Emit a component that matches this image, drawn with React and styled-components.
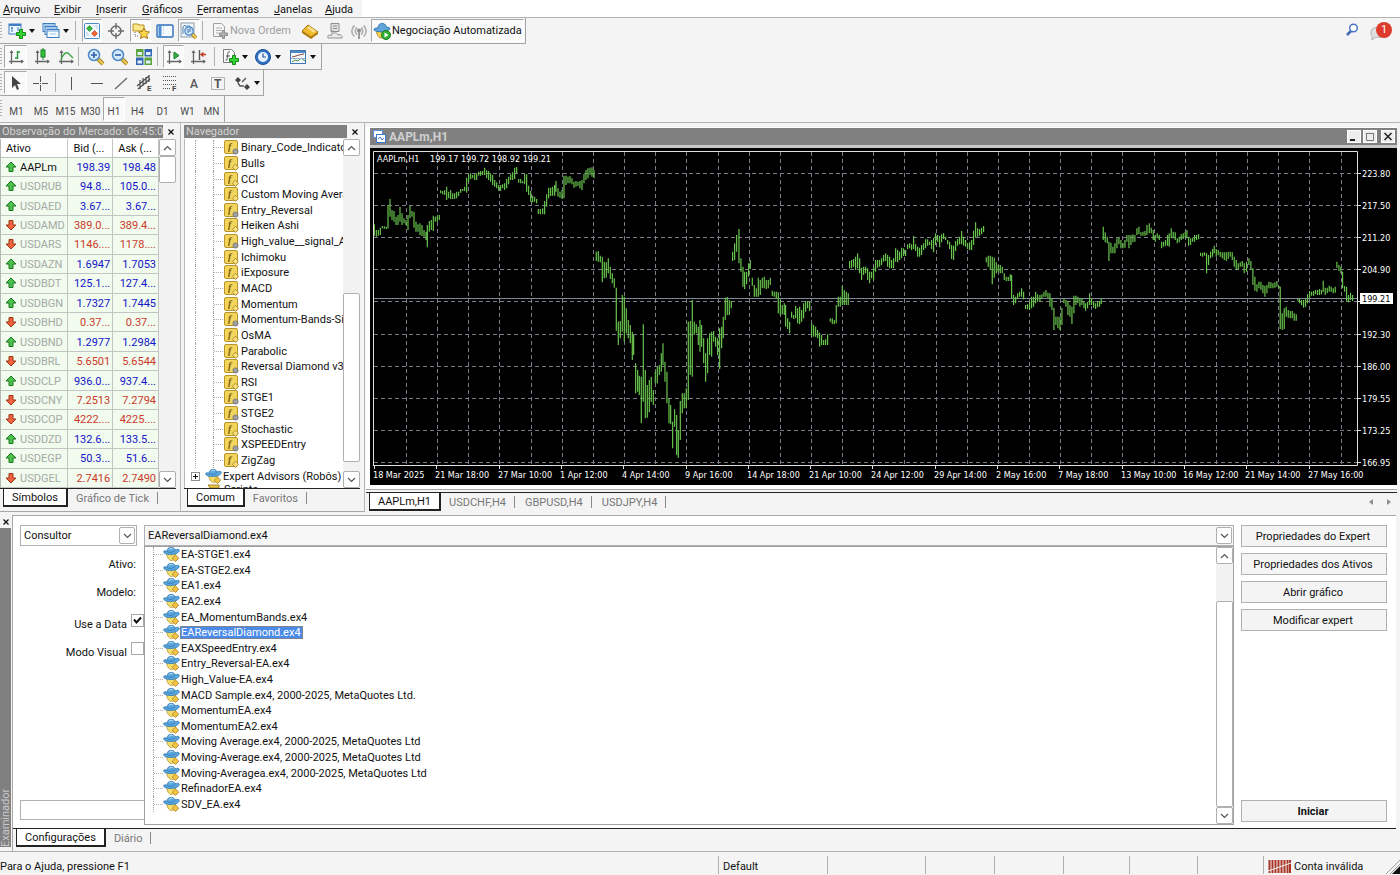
import React, { useState } from "react";
import styled, { createGlobalStyle, css } from "styled-components";

const GlobalStyle = createGlobalStyle`
    * {
        box-sizing: border-box;
    }

    body {
        margin: 0;
        background-color: #f4f4f4;
        color: #111111;
        font-family: Roboto, "DejaVu Sans Condensed", "Noto Sans", sans-serif;
        font-size: 11px;
        line-height: 14px;
    }

    button,
    input,
    select {
        font: inherit;
        color: inherit;
    }

    ul {
        list-style: none;
        margin: 0;
        padding: 0;
    }
`;

/* ---------- data ---------- */

const menus = ["Arquivo", "Exibir", "Inserir", "Gráficos", "Ferramentas", "Janelas", "Ajuda"];
const menuWidths = [51, 42, 46, 55, 77, 51, 40];

const timeframes = ["M1", "M5", "M15", "M30", "H1", "H4", "D1", "W1", "MN"];
const timeframeWidths = [25, 24, 25, 25, 22, 25, 25, 25, 23];

const symbols = [
    ["AAPLm", "198.39", "198.48", true],
    ["USDRUB", "94.8...", "105.0...", true],
    ["USDAED", "3.67...", "3.67...", true],
    ["USDAMD", "389.0...", "389.4...", false],
    ["USDARS", "1146....", "1178....", false],
    ["USDAZN", "1.6947", "1.7053", true],
    ["USDBDT", "125.1...", "127.4...", true],
    ["USDBGN", "1.7327", "1.7445", true],
    ["USDBHD", "0.37...", "0.37...", false],
    ["USDBND", "1.2977", "1.2984", true],
    ["USDBRL", "5.6501", "5.6544", false],
    ["USDCLP", "936.0...", "937.4...", true],
    ["USDCNY", "7.2513", "7.2794", false],
    ["USDCOP", "4222....", "4225....", false],
    ["USDDZD", "132.6...", "133.5...", true],
    ["USDEGP", "50.3...", "51.6...", true],
    ["USDGEL", "2.7416", "2.7490", false],
];

// second value: custom indicators carry the grey gear badge
const indicators = [
    ["Binary_Code_Indicator", true],
    ["Bulls", false],
    ["CCI", false],
    ["Custom Moving Average", false],
    ["Entry_Reversal", true],
    ["Heiken Ashi", false],
    ["High_value__signal_Alert", true],
    ["Ichimoku", false],
    ["iExposure", false],
    ["MACD", false],
    ["Momentum", false],
    ["Momentum-Bands-Signal", true],
    ["OsMA", false],
    ["Parabolic", false],
    ["Reversal Diamond v3.0", true],
    ["RSI", false],
    ["STGE1", true],
    ["STGE2", true],
    ["Stochastic", false],
    ["XSPEEDEntry", true],
    ["ZigZag", false],
];

const experts = [
    "EA-STGE1.ex4",
    "EA-STGE2.ex4",
    "EA1.ex4",
    "EA2.ex4",
    "EA_MomentumBands.ex4",
    "EAReversalDiamond.ex4",
    "EAXSpeedEntry.ex4",
    "Entry_Reversal-EA.ex4",
    "High_Value-EA.ex4",
    "MACD Sample.ex4, 2000-2025, MetaQuotes Ltd.",
    "MomentumEA.ex4",
    "MomentumEA2.ex4",
    "Moving Average.ex4, 2000-2025, MetaQuotes Ltd",
    "Moving-Average.ex4, 2000-2025, MetaQuotes Ltd",
    "Moving-Averagea.ex4, 2000-2025, MetaQuotes Ltd",
    "RefinadorEA.ex4",
    "SDV_EA.ex4",
];

const prices = ["223.80", "217.50", "211.20", "204.90", "", "192.30", "186.00", "179.55", "173.25", "166.95"];

const dates = [
    "18 Mar 2025",
    "21 Mar 18:00",
    "27 Mar 10:00",
    "1 Apr 12:00",
    "4 Apr 14:00",
    "9 Apr 16:00",
    "14 Apr 18:00",
    "21 Apr 10:00",
    "24 Apr 12:00",
    "29 Apr 14:00",
    "2 May 16:00",
    "7 May 18:00",
    "13 May 10:00",
    "16 May 12:00",
    "21 May 14:00",
    "27 May 16:00",
];

// [x offset, "x:high-low ..."], three units to a pixel
const barSets = [
    [
        0,
        "25:298-332 31:315-335 37:315-332 43:308-330 49:303-310 55:304-311 61:305-312 66:240-310 72:222-275 78:255-285 84:258-290 90:275-300 96:270-300 102:245-290 108:265-300 114:280-295 120:285-300 126:270-315 132:242-280 138:258-275 144:260-308 150:290-320 156:298-320 162:295-330 168:300-333 174:315-335 180:320-345 184:300-367 190:288-320 196:285-315 202:272-318 208:275-290 214:272-290 220:270-285 224:196-205 230:198-208 236:196-210 242:185-225 248:200-220 254:195-222 260:205-222 266:205-222 272:200-220 278:200-213 284:192-203 290:192-198 296:185-198 302:158-203 308:148-170 314:145-162 320:150-160 326:148-165 332:145-165 338:140-152 344:138-152 350:138-150 356:128-150 362:136-160 368:138-165 374:145-170 380:150-180 386:165-185 392:172-190 398:180-197 404:180-197 410:178-190 416:175-195 422:162-190 428:155-178 434:148-165 440:142-165 446:128-162 452:126-145 458:162-173 464:162-175 470:168-175 476:146-178 482:148-200 488:182-210 494:198-230 500:212-232 506:215-230 512:222-235 517:252-267 523:252-268 530:250-268 536:228-268 542:208-245 548:188-220 554:188-213 560:185-212 566:180-212 570:168-200 576:190-215 582:200-218 588:195-222 594:152-220 600:152-180 606:155-175 612:153-175 618:160-178 624:170-188 630:168-185 636:170-182 642:168-190 648:165-195 654:148-175 660:135-165 666:130-160 672:128-150 678:127-155 684:135-160 691:380-408 697:378-410 703:392-412 709:395-472 715:410-460 721:412-458 727:400-445 733:425-462 739:445-475 745:460-488 751:488-617 757:590-660 763:588-640 769:510-620 775:515-650 781:550-625 787:585-640 793:600-655 799:620-705 803:630-690 809:715-805 815:735-800 820:752-810 826:755-895 832:598-830 838:735-880 844:780-878 850:765-862 856:755-830 862:795-840 868:740-775 874:725-775 880:720-750 886:685-740 891:655-720 897:710-770 903:740-835 909:820-895 914:840-898 920:890-970 926:853-905 932:870-990 937:915-998 943:828-945 949:805-865 955:805-850 961:790-850 967:590-825 973:588-750 979:525-755 985:590-630 991:598-625 997:605-660",
    ],
    [
        1002,
        "0:585-680 5:600-665 11:640-715 17:685-770 23:640-745 29:625-690 35:620-695 41:618-650 47:635-665 53:640-690 59:610-732 65:605-670 70:575-640 76:518-585 82:516-570 88:525-570 94:528-550 98:380-408 104:355-405 110:330-380 117:312-415 123:400-440 129:425-485 134:440-492 140:440-478 146:415-455 151:405-432 157:458-482 163:480-515 169:490-515 175:458-515 181:465-510 187:458-490 193:455-490 199:465-492 205:465-490 211:458-480 217:497-513 223:500-515 229:500-520 235:502-565 241:525-570 247:540-568 253:535-570 257:540-605 263:580-612 269:590-625 275:560-578 281:570-582 287:543-580 293:550-595 299:545-597 305:555-590 311:535-580 317:528-560 323:528-550 329:530-558 335:595-635 341:600-635 347:605-635 353:615-640 359:623-665 365:630-660 371:645-660 377:643-660 383:628-660 391:580-590 397:580-597 403:585-598 409:540-595 415:515-545 421:515-545 427:482-540 433:495-540 439:500-540 445:505-540 449:408-430 455:405-430 461:402-425 467:395-435 473:385-430 479:400-445 485:428-465 491:425-450 497:425-445 503:430-465 509:440-475 515:440-460 521:425-465 527:405-440 533:405-428 539:405-425 545:400-420 551:390-410 557:385-408 563:390-425 569:395-430 575:405-430 581:400-430 587:370-410 593:375-412 599:380-405 605:368-400 611:370-393 617:375-393 623:358-372 629:355-370 635:358-375 641:333-372 647:358-378 653:365-395 659:368-395 665:360-390 671:355-375 677:343-370 683:343-362 689:350-360 695:345-372 701:338-382 707:325-360 713:330-350 719:333-367 725:328-352 731:325-342 737:335-345 743:345-358 749:350-372 755:360-402 761:362-405 767:348-378 773:342-362 779:335-358 785:318-358 791:335-362 797:345-365 803:355-372 809:352-375 815:345-375 821:317-360 827:292-338 833:310-335 839:312-332 845:308-328 851:303-322 859:397-412 865:392-425 871:392-435 877:395-478 883:398-458 889:412-445 895:420-440 901:420-445 907:425-445 913:445-465 919:455-468 925:455-468 931:448-468 935:450-520 941:510-540 947:515-535 953:505-522 959:500-515 965:490-515 971:500-523 977:540-552 983:538-553 989:530-555 995:515-550 1001:515-545 1007:500-535 1013:508-530",
    ],
    [
        2022,
        "0:510-530 6:508-522 12:500-515 18:495-515 24:503-520 30:505-545 36:520-555 42:548-615 48:575-600 54:575-610 60:575-615 66:548-600 72:522-535 78:525-545 84:528-570 90:540-575 96:545-597 102:512-565 108:512-540 114:515-535 120:520-545 126:520-540 132:530-550 137:535-557 143:530-550 149:505-540 155:520-540 161:528-548 167:535-552 173:530-547 179:528-545 184:520-537 190:305-345 196:322-352 202:335-355 207:350-408 213:353-385 219:365-385 225:355-385 231:340-370 237:338-358 243:345-370 249:355-370 255:345-368 261:330-350 267:330-370 273:330-360 279:328-352 285:330-350 291:310-330 297:305-327 303:322-332 309:320-332 315:318-332 321:300-330 328:295-325 334:308-325 340:315-345 346:330-350 352:325-340 358:330-345 365:350-370 371:350-365 377:345-362 383:330-362 388:325-365 394:310-340 400:320-340 406:322-345 412:340-355 418:335-352 424:328-345 430:325-342 436:320-340 441:315-340 446:335-362 452:340-360 458:338-350 464:330-350 470:330-345 476:328-343 482:383-393 488:383-395 494:382-392 500:385-445 506:390-420 512:380-400 518:372-395 523:362-385 529:372-395 535:375-390 541:380-395 547:382-400 553:382-405 559:382-408 565:380-402 571:380-395 577:382-405 583:395-425 589:405-435 595:415-435 601:412-425 607:408-425 613:415-445 620:410-440 627:400-420 633:408-435 639:430-480 645:455-497 651:478-500 657:470-490 663:470-495 669:480-505 675:482-515 681:480-505 687:470-490 693:472-490 699:475-490 705:472-488 711:468-485 717:483-490 721:485-612 727:565-615 733:550-612 739:545-575 745:555-578 751:558-580 757:558-580 763:565-587 769:568-587 774:522-528 779:522-535 785:525-540 791:525-548 797:522-545 803:508-535 809:498-520 815:500-512 821:498-512 827:495-508 833:495-510 839:492-510 845:495-508 850:467-500 856:488-510 862:488-505 868:482-500 874:485-500 880:490-505 886:485-503 891:410-428 897:420-438 903:425-445 908:440-490 914:483-500 920:485-530 926:510-532 932:503-525 938:510-528",
    ],
];

/* ---------- icons ---------- */

const Svg = ({ size = 18, children }) => (
    <svg width={size} height={size} viewBox="0 0 18 18" fill="none" aria-hidden="true">
        {children}
    </svg>
);

const Plus = ({ x = 8, y = 7 }) => (
    <path
        transform={`translate(${x} ${y})`}
        d="M3.5 .5h3v3h3v3h-3v3h-3v-3h-3v-3h3z"
        fill="#35d335"
        stroke="#128a12"
    />
);

const Axes = () => (
    <g>
        <path d="M4.500 3v13M2 13.500h14" stroke="#666666" strokeWidth="1.300" />
        <path d="M2.500 5l2-3 2 3zM14 11.500l3 2-3 2z" fill="#666666" />
    </g>
);

const Lens = ({ plus }) => (
    <Svg>
        <path d="M11 11l5 5" stroke="#a88420" strokeWidth="4" />
        <path d="M11 11l5 5" stroke="#f0cc52" strokeWidth="2" />
        <circle cx="7" cy="7" r="5.5" fill="#d5ebfc" stroke="#4a86c8" strokeWidth="1.5" />
        <path d={plus ? "M4 7h6M7 4v6" : "M4 7h6"} stroke="#2b5fa8" strokeWidth="1.6" />
    </Svg>
);

const icons = {
    newChart: (
        <Svg>
            <rect x="1" y="2" width="12" height="10" fill="#eef6ff" stroke="#3d7cc0" />
            <path d="M1 3h12" stroke="#3d7cc0" strokeWidth="2" />
            <path d="M4 5v5M3 6h2M10 5v4" stroke="#3d7cc0" />
            <Plus />
        </Svg>
    ),
    profiles: (
        <Svg>
            <rect x="1" y="1.500" width="12" height="8" fill="#e2f0fd" stroke="#3d7cc0" />
            <rect x="3" y="4.500" width="12" height="8" fill="#e2f0fd" stroke="#3d7cc0" />
            <rect x="5" y="7.500" width="12" height="8" fill="#f5faff" stroke="#3d7cc0" />
            <path d="M1 3h12M3 6h12M5 9h12" stroke="#6ba2dc" />
            <path d="M8 12h6" stroke="#9cc4ec" />
        </Svg>
    ),
    market: (
        <Svg>
            <rect x="1.5" y="1.5" width="15" height="15" rx="1" fill="#f2f8ff" stroke="#4c8ac8" />
            <path d="M3 13h3M3 11h2M11 4h4M13 6h2" stroke="#b4cce4" />
            <path d="M6.500 3.500l3 3-3 3-3-3z" fill="#38b838" stroke="#168016" strokeWidth=".6" />
            <path d="M11.500 8.500l3 3-3 3-3-3z" fill="#f06432" stroke="#b23a12" strokeWidth=".6" />
        </Svg>
    ),
    crosshair: (
        <Svg>
            <circle cx="9" cy="9" r="5" stroke="#6a6a6a" strokeWidth="1.4" />
            <path d="M9 1v6M9 11v6M1 9h6M11 9h6" stroke="#6a6a6a" strokeWidth="1.4" />
        </Svg>
    ),
    navigator: (
        <Svg>
            <path d="M1 4V2h5l1 1h5v6H1z" fill="#fbe88a" stroke="#b89020" />
            <path
                d="M12 6l1.7 3.5 3.8.5-2.8 2.6.8 3.9L12 14.7l-3.5 1.8.8-3.9L6.500 10l3.800-.5z"
                fill="#ffd84a"
                stroke="#a87a10"
            />
            <path d="M3 10v4h3" stroke="#6a6a6a" strokeDasharray="1 1" />
        </Svg>
    ),
    terminal: (
        <Svg>
            <rect x="1" y="3" width="16" height="12" rx="1" fill="#f4faff" stroke="#2f6fb8" strokeWidth="1.4" />
            <path d="M4 3v12" stroke="#4f8fd2" strokeWidth="3" />
            <path d="M7 5h1M7 8h1M7 11h1" stroke="#9cb8d8" />
        </Svg>
    ),
    tester: (
        <Svg>
            <rect x="1" y="1" width="13" height="14" fill="#f0f4f8" stroke="#8c9cac" />
            <path d="M3 12V5l2-2 2 3V4h3v5" stroke="#5684b4" />
            <path d="M12 12l4 4" stroke="#a88420" strokeWidth="3.500" />
            <path d="M12 12l4 4" stroke="#f0cc52" strokeWidth="1.8" />
            <circle cx="9" cy="9" r="4.200" fill="#cfe6fa" stroke="#4a86c8" strokeWidth="1.200" />
            <path d="M8 7v4M10 6v4" stroke="#3d6ca0" />
        </Svg>
    ),
    order: (
        <Svg>
            <path d="M2.500 1.500h8l3 3v10h-11z" fill="#f6f6f6" stroke="#a0a0a0" />
            <path d="M5 6h6M5 8.500h6M5 11h3" stroke="#b0b0b0" />
            <path d="M11.500 8.500h2v2.500h3v2.500h-3V16.500h-2v-3h-3V11h3z" fill="#b4b4b4" stroke="#8c8c8c" />
        </Svg>
    ),
    book: (
        <Svg>
            <path d="M1 9l9 6 7-5v2l-7 5-9-6z" fill="#b47c10" />
            <path d="M1 9l6-6 10 7-7 5z" fill="#f0b92c" stroke="#a87410" />
            <path d="M6 6l2-2 7 5-2 2z" fill="#fbe08a" />
        </Svg>
    ),
    printer: (
        <Svg>
            <path d="M5 1.500h8v8H5z" fill="#e0e0e0" stroke="#8f8f8f" />
            <path d="M7 4h4M7 6.500h4M6 8v4" stroke="#8f8f8f" />
            <path d="M2 16c-1-3 2-4 3-2 1-4 6-4 7-1 3-1 5 1 4 3z" fill="#ececec" stroke="#8f8f8f" />
        </Svg>
    ),
    signal: (
        <Svg>
            <path d="M4.500 3.500a7 7 0 000 11M13.500 3.500a7 7 0 010 11M7 5.500a4.500 4.500 0 000 7M11 5.500a4.500 4.500 0 010 7" stroke="#b0b0b0" strokeWidth="1.700" />
            <circle cx="9" cy="8.500" r="2" fill="#8c8c8c" />
            <path d="M8 10h2v7H8z" fill="#9c9c9c" />
        </Svg>
    ),
    auto: (
        <Svg>
            <path d="M3 8h10c0 5-2 8-5 8s-4-4-5-8z" fill="#f2d154" stroke="#b08c20" />
            <path d="M1 8c0-2 2-2 4-2 0-6 8-6 8-1 3 0 4 1 4 2-3 3-12 4-16 1z" fill="#5fa5dc" stroke="#2f74b0" />
            <circle cx="13" cy="13" r="4.500" fill="#35b035" stroke="#15801a" />
            <path d="M11.500 10.500l4 2.500-4 2.500z" fill="#ffffff" />
        </Svg>
    ),
    bars: (
        <Svg>
            <Axes />
            <path d="M10.500 3v8M10.500 4H13M8 10h2.500" stroke="#28943c" strokeWidth="1.400" />
        </Svg>
    ),
    candles: (
        <Svg>
            <Axes />
            <path d="M10 0v12" stroke="#178026" />
            <rect x="8" y="2" width="4" height="7" fill="#35c435" stroke="#178026" />
        </Svg>
    ),
    line: (
        <Svg>
            <Axes />
            <path d="M4 12c2-6 5-9 8-6l4 4" stroke="#3fa64c" strokeWidth="1.400" />
        </Svg>
    ),
    zoomIn: <Lens plus />,
    zoomOut: <Lens />,
    tiles: (
        <Svg>
            <path d="M1 1h7.500v7.500H1zM9.500 9.500H17V17H9.500z" fill="#58a63c" />
            <path d="M9.500 1H17v7.500H9.500zM1 9.500h7.500V17H1z" fill="#3468b4" />
            <path d="M2.500 4H7v3H2.500zM11 4h4.500v3H11zM2.500 12.500H7v3H2.500zM11 12.500h4.500v3H11z" fill="#e2efff" />
        </Svg>
    ),
    scroll: (
        <Svg>
            <Axes />
            <path d="M9 4l5 3.500L9 11z" fill="#37b040" stroke="#178026" />
        </Svg>
    ),
    shift: (
        <Svg>
            <Axes />
            <path d="M10.500 2v10" stroke="#555555" strokeWidth="1.400" />
            <path d="M17 6.500h-4M14.500 4.500l-2.500 2 2.500 2" stroke="#c03a20" strokeWidth="1.300" />
        </Svg>
    ),
    indicators: (
        <Svg>
            <path d="M2.500 1.500h8l3 3v10h-11z" fill="#fbfbfb" stroke="#7c7c7c" />
            <path d="M9 4c-2-1-2 0-2.500 4S6 13 4.500 12M5 8h4" stroke="#555555" />
            <Plus />
        </Svg>
    ),
    clock: (
        <Svg>
            <circle cx="9" cy="9" r="7.500" fill="#2e73c8" stroke="#1b4d90" />
            <circle cx="9" cy="9" r="5" fill="#e8f3ff" />
            <path d="M9 5.500V9h3" stroke="#27548c" strokeWidth="1.200" />
        </Svg>
    ),
    template: (
        <Svg>
            <rect x="1.500" y="2.500" width="15" height="13" fill="#f5faff" stroke="#3f76b4" />
            <path d="M2 4h14" stroke="#4f88c8" strokeWidth="2" />
            <path d="M3 9l4-1 3-1 5-1" stroke="#8c4a3c" />
            <path d="M3 14l3-2 3 1 3-3 4 3" stroke="#46963c" />
            <path d="M2 10.500h14" stroke="#9cb4d0" />
        </Svg>
    ),
    cursor: (
        <Svg>
            <path d="M5 2v12l3-3 2 5 2-1-2-5h4z" fill="#444444" />
        </Svg>
    ),
    cross: (
        <Svg>
            <path d="M9.500 2v6M9.500 11v6M2 9.500h6M11 9.500h6M9 9.500h1" stroke="#555555" />
        </Svg>
    ),
    vline: (
        <Svg>
            <path d="M9.500 3v13" stroke="#555555" />
        </Svg>
    ),
    hline: (
        <Svg>
            <path d="M3 9.500h12" stroke="#555555" />
        </Svg>
    ),
    trend: (
        <Svg>
            <path d="M3 15L15 4" stroke="#666666" strokeWidth="1.200" />
        </Svg>
    ),
    channel: (
        <Svg>
            <path d="M1 12L13 2M2 15L14 5M4 6v9M7 4v8M10 3v7M13 1v7" stroke="#4c4c4c" strokeWidth="1.200" />
            <text x="11" y="17" fontSize="8" fontWeight="700" fill="#444444">E</text>
        </Svg>
    ),
    fibo: (
        <Svg>
            <path d="M2 2.500h14M2 6.500h14M2 10.500h14M2 14.500h8" stroke="#555555" strokeDasharray="1 1" />
            <text x="11" y="17" fontSize="8" fontWeight="700" fill="#444444">F</text>
        </Svg>
    ),
    text: (
        <Svg>
            <text x="5" y="14" fontSize="12" fontWeight="500" fill="#555555">A</text>
        </Svg>
    ),
    label: (
        <Svg>
            <rect x="2.500" y="3.500" width="13" height="12" stroke="#777777" strokeDasharray="1 1" />
            <text x="5" y="14" fontSize="12" fontWeight="700" fill="#555555">T</text>
        </Svg>
    ),
    arrows: (
        <Svg>
            <path d="M5 3l3 3-3 3-3-3zM14 10l3 3-3 3-3-3z" fill="#444444" />
            <path d="M9 8l4-4M5 9l2 3h4" stroke="#555555" strokeWidth="1.400" />
        </Svg>
    ),
};

const HatIcon = () => (
    <svg width="17" height="15" viewBox="0 0 17 15" aria-hidden="true">
        <path d="M3.500 6.500h9c.5 4-1 7-4 7s-4.500-4-5-7z" fill="#f3dc68" stroke="#b4932c" strokeWidth=".8" />
        <path
            d="M.6 5c0-1.500 2-1.200 3.400-.8C4-.6 11-.8 12 2.800c2-.6 3.800-.8 4.200.2.400 2-2 3.500-5 4.200C7 8 1.500 7.500 .6 5z"
            fill="#5aa6de"
            stroke="#3379b2"
            strokeWidth=".8"
        />
        <path d="M4 4.500c2 1.500 6 1.200 8-1" stroke="#3379b2" strokeWidth=".8" fill="none" />
        <path d="M6 2.500c1-1.500 3-1.500 4-.8" stroke="#b2dcf6" fill="none" />
        <path d="M12.500 8l3.300 3.200-3.300 3.300-3.300-3.300z" fill="#f2c544" stroke="#a87c18" strokeWidth=".8" />
    </svg>
);

const IndicatorIcon = ({ custom }) => (
    <svg width="15" height="15" viewBox="0 0 15 15" aria-hidden="true">
        <rect x=".5" y=".5" width="13" height="13" rx="1.500" fill="#f3d55c" stroke="#b8942c" />
        <text x="4" y="10" fontSize="10" fontStyle="italic" fontWeight="700" fontFamily="Liberation Serif, serif" fill="#7c5e10">
            f
        </text>
        {custom ? (
            <circle cx="11.500" cy="11.500" r="2.600" fill="#a0a0a0" stroke="#6e6e6e" strokeWidth=".8" />
        ) : (
            <path d="M11.500 8.200l3 3.100-3 3.200-3-3.200z" fill="#f8e07c" stroke="#a07a18" strokeWidth=".8" />
        )}
    </svg>
);

const ArrowIcon = ({ up }) => (
    <svg width="12" height="12" viewBox="0 0 12 12" aria-hidden="true">
        {up ? (
            <path d="M6 1l5 5H8v4.500H4V6H1z" fill="#4cc04c" stroke="#1c7820" />
        ) : (
            <path d="M6 11l5-5H8V1.500H4V6H1z" fill="#ee6440" stroke="#a03414" />
        )}
    </svg>
);

const Chevron = ({ up }) => (
    <svg width="9" height="6" viewBox="0 0 9 6" fill="none" aria-hidden="true">
        <path d={up ? "M1 5l3.500-3.500L8 5" : "M1 1l3.500 3.500L8 1"} stroke="#555555" strokeWidth="1.200" />
    </svg>
);

const Caret = () => (
    <svg width="6" height="4" viewBox="0 0 6 4" aria-hidden="true">
        <path d="M0 0h6L3 4z" fill="#111111" />
    </svg>
);

/* ---------- menu and toolbars ---------- */

const Window = styled.div`
    display: flex;
    flex-direction: column;
    min-height: 100vh;
    overflow: hidden;
`;

const MenuBar = styled.nav`
    display: flex;
    height: 18px;
    background-color: #ffffff;
    border-bottom: 1px solid #b4b4b4;
`;

const MenuItem = styled.button`
    width: ${({ $width }) => $width}px;
    padding: 2px 0 0 3px;
    border: 0;
    background-color: #f4f4f4;
    text-align: left;
    line-height: 14px;

    &::first-letter {
        text-decoration: underline;
    }
`;

const ToolbarArea = styled.div`
    display: flex;
    flex-direction: column;
    align-items: flex-start;
    position: relative;
    border-bottom: 1px solid #b4b4b4;
`;

const Toolbar = styled.div`
    display: flex;
    height: 26px;
    padding: 1px 1px 1px 0;
    border-right: 1px solid #a4a4a4;
    border-bottom: ${({ $last }) => ($last ? "0" : "1px solid #a4a4a4")};
`;

const Grip = styled.span`
    width: 2px;
    margin: 3px 2px 3px 0;
    background: repeating-linear-gradient(#b0b0b0 0 1px, #f4f4f4 1px 3px);
`;

const ToolButton = styled.button`
    display: flex;
    justify-content: ${({ $left }) => ($left ? "flex-start" : "center")};
    align-items: center;
    gap: ${({ $left }) => ($left ? 1 : 3)}px;
    width: ${({ $width }) => $width}px;
    padding: ${({ $left }) => ($left ? "0 0 0 1px" : "0")};
    border: 1px solid transparent;
    background: none;
    color: ${({ disabled }) => (disabled ? "#a0a0a0" : "#111111")};
    white-space: nowrap;

    svg {
        flex: none;
    }

    ${({ $pressed }) =>
        $pressed &&
        css`
            border-color: #a8a8a8 #ffffff #ffffff #a8a8a8;
            background-color: #fafafa;
        `}
`;

const TimeButton = styled(ToolButton)`
    padding-top: 5px;
    color: #4c4c4c;
    font-size: 10px;
`;

const Separator = styled.span`
    width: ${({ $width }) => $width}px;
    margin: 2px 0;
    background: linear-gradient(#b0b0b0, #b0b0b0) 2px 0 / 1px 100% no-repeat;
`;

const CornerTools = styled.div`
    position: absolute;
    top: 2px;
    right: 8px;
    display: flex;
    align-items: center;
    gap: 8px;
`;

const CornerButton = styled.button`
    position: relative;
    padding: 0;
    border: 0;
    background: none;
    height: 22px;
`;

const Badge = styled.span`
    position: absolute;
    top: 2px;
    right: 0;
    width: 16px;
    height: 16px;
    border-radius: 8px;
    background-color: #dc3a2a;
    color: #ffffff;
    font-size: 11px;
    line-height: 16px;
    text-align: center;
`;

/* ---------- docked panels ---------- */

const MainRow = styled.main`
    display: flex;
    height: 392px;
`;

const Dock = styled.section`
    display: flex;
    flex-direction: column;
    flex: none;
    width: ${({ $width }) => $width}px;
    height: 389px;
    padding-top: 2px;
    padding-left: ${({ $inset }) => $inset || 0}px;
    padding-right: 4px;
    border-right: 1px solid #b8b8b8;
    border-bottom: 1px solid #a8a8a8;
`;

const DockTitle = styled.header`
    display: flex;
    height: 14px;
    line-height: 13px;
    color: #d4d4d4;
`;

const TitleText = styled.span`
    flex: 1;
    height: 13px;
    padding-left: 2px;
    background-color: #808080;
    white-space: nowrap;
    overflow: hidden;
`;

const CloseButton = styled.button`
    width: ${({ $width }) => $width || 13}px;
    height: 13px;
    padding: 0 0 0 2px;
    border: 0;
    background: none;
    line-height: 0;
`;

const CloseMark = () => (
    <svg width="6" height="6" viewBox="0 0 6 6" aria-hidden="true">
        <path d="M.5 .5l5 5M5.500 .5l-5 5" stroke="#111111" strokeWidth="1.300" />
    </svg>
);

const DockBody = styled.div`
    display: flex;
    flex: 1;
    min-height: 0;
    background-color: #ffffff;
    border-left: 1px solid #b8b8b8;
`;

const QuoteTable = styled.table`
    flex: 1;
    height: 349px;
    table-layout: fixed;
    border-collapse: collapse;
    background-color: #f1fbee;
`;

const HeadCell = styled.th`
    width: ${({ $width }) => $width}px;
    height: 18px;
    padding: 2px 0 0 5px;
    background-color: #ffffff;
    border-right: 1px solid #c4c4c4;
    border-bottom: 1px solid #c4c4c4;
    font-weight: 400;
    text-align: left;
    white-space: nowrap;
`;

const Cell = styled.td`
    padding: 2px 2px 0 0;
    border-right: 1px solid #c4c4c4;
    border-bottom: 1px solid #c4c4c4;
    color: ${({ $up }) => ($up ? "#1414c8" : "#cc3a2a")};
    text-align: right;
    white-space: nowrap;
`;

const SymbolCell = styled(Cell)`
    color: ${({ $active }) => ($active ? "#111111" : "#a4aaa4")};
    text-align: left;

    svg {
        margin: 0 3px 0 4px;
        vertical-align: -2px;
    }
`;

const ScrollTrack = styled.div`
    display: flex;
    flex-direction: column;
    flex: none;
    width: 17px;
    background-color: #f2f2f2;
`;

const ScrollButton = styled.button`
    display: flex;
    justify-content: center;
    align-items: center;
    flex: none;
    height: 17px;
    padding: 0;
    border: 1px solid #b0b0b0;
    border-radius: 2px;
    background-color: #ffffff;
`;

const ScrollThumb = styled.div`
    flex: ${({ $size }) => $size};
    border: 1px solid #b0b0b0;
    border-radius: 2px;
    background-color: #ffffff;
`;

const ScrollGap = styled.div`
    flex: ${({ $size }) => $size};
`;

function ScrollBar({ before, size, after }) {
    return (
        <ScrollTrack>
            <ScrollButton type="button" aria-label="Acima">
                <Chevron up />
            </ScrollButton>
            <ScrollGap $size={before} />
            <ScrollThumb $size={size} />
            <ScrollGap $size={after} />
            <ScrollButton type="button" aria-label="Abaixo">
                <Chevron />
            </ScrollButton>
        </ScrollTrack>
    );
}

const TabBar = styled.div`
    display: flex;
    flex: none;
    height: 23px;
    padding-left: 3px;
    border-top: 1px solid #222222;
`;

const Tab = styled.button`
    height: 18px;
    padding: 1px 8px 0;
    border: 0;
    background: none;
    color: #777777;
    white-space: nowrap;
    line-height: 14px;

    ${({ $active }) =>
        $active &&
        css`
            background-color: #ffffff;
            border: solid #222222;
            border-width: 0 2px 2px 1px;
            color: #111111;
        `}
`;

const TabDivider = styled.span`
    width: 1px;
    height: 12px;
    margin: 3px 2px 0 0;
    background-color: #888888;
`;

/* ---------- navigator tree ---------- */

const TreeBox = styled.div`
    display: flex;
    flex-direction: column;
    flex: 1;
    min-width: 0;
    overflow: hidden;
    padding-top: ${({ $top }) => $top || 0}px;
`;

const Tree = styled.ul`
    display: grid;
    grid-auto-rows: 1fr;
    flex: none;
    height: ${({ $height }) => $height}px;
    padding-left: ${({ $indent }) => $indent}px;
`;

const TreeRow = styled.li`
    display: flex;
    align-items: center;
    min-height: 0;
    margin-left: ${({ $root }) => ($root ? "-10px" : "0")};
    white-space: nowrap;

    svg {
        flex: none;
    }
`;

const Branch = styled.span`
    width: ${({ $width }) => $width}px;
    height: 100%;
    flex: none;
    border-left: 1px dotted #a0a0a0;
    background: ${({ $dash }) =>
        $dash ? "repeating-linear-gradient(90deg, #b0b0b0 0 1px, transparent 1px 2px) 0 50% / 100% 1px no-repeat" : "none"};
`;

const TreeLabel = styled.span`
    padding: 1px 2px 0 ${({ $wide }) => ($wide ? 2 : 1)}px;
    line-height: 12px;
    ${({ $selected }) =>
        $selected &&
        css`
            background-color: #4a8ae8;
            color: #ffffff;
            outline: 1px solid #7c8494;
            outline-offset: -1px;
        `}
`;

const Expander = styled.button`
    display: flex;
    justify-content: center;
    align-items: center;
    width: 9px;
    height: 9px;
    margin: 0 5px 0 6px;
    padding: 0;
    border: 1px solid #909090;
    background-color: #ffffff;
    line-height: 0;
`;

const PeekRow = styled.div`
    display: flex;
    gap: 4px;
    flex: none;
    height: 4px;
    padding-left: 22px;
    overflow: hidden;
    line-height: 12px;
`;

/* ---------- chart ---------- */

const ChartArea = styled.section`
    display: flex;
    flex-direction: column;
    flex: 1;
    min-width: 0;
    padding: 4px 3px 0 1px;
`;

const ChartWindow = styled.div`
    padding: 1px 0 4px 4px;
    margin-bottom: 2px;
    border-bottom: 1px solid #a8a8a8;
    background-color: #ffffff;
`;

const ChartTitle = styled.header`
    display: flex;
    align-items: center;
    gap: 2px;
    height: 17px;
    padding-right: 2px;
    background-color: #808080;
    color: #d0d0d0;
    font-weight: 700;
    font-size: 12px;
`;

const WindowButton = styled.button`
    width: 14px;
    height: 13px;
    padding: 0;
    border: 1px solid #ffffff;
    background-color: #ececec;
    line-height: 0;

    &:first-of-type {
        margin-left: auto;
    }

    &:last-of-type {
        margin-left: 2px;
    }
`;

const ChartBox = styled.div`
    height: 340px;
    border-top: 3px solid #c8c8c8;
    background-color: #000000;
    font-family: "DejaVu Sans Condensed", "DejaVu Sans", sans-serif;

    svg {
        display: block;
        width: 100%;
        height: 337px;
    }
`;

const TabArrows = styled.span`
    display: flex;
    align-items: center;
    gap: 14px;
    height: 17px;
    margin-left: auto;
    padding-right: 6px;
`;

function PriceChart() {
    const columns = Array.from({ length: 31 }, (_, i) => Math.round(36 + i * 31.15));
    const rows = prices.map((_, i) => Math.round(25 + i * 32.11));
    const bars = barSets
        .map(([offset, text]) =>
            text
                .split(" ")
                .map((bar) => {
                    const [x, high, low] = bar.split(/[:-]/).map(Number);
                    return `M${x + offset} ${high}V${low}`;
                })
                .join("")
        )
        .join("");

    return (
        <svg viewBox="0 0 1026 337" preserveAspectRatio="xMinYMin meet" fontSize="9" fill="#ffffff">
            <g stroke="#7c7c88" strokeDasharray="4 3">
                {columns.map((x) => (
                    <path key={x} d={`M${x + 0.5} 4V317`} />
                ))}
                {rows.map((y) => (
                    <path key={y} d={`M4 ${y + 0.5}H987`} />
                ))}
            </g>
            <path d="M4 150.500H987" stroke="#7c8a98" />
            <path transform="translate(-4 -23) scale(.3333)" d={bars} stroke="#68c44c" strokeWidth="3.600" />
            <path d="M3.500 318V3.500H987.500V317.500H3" fill="none" stroke="#e0e0e0" />
            <text x="7" y="14">AAPLm,H1</text>
            <text x="60" y="14">199.17 199.72 198.92 199.21</text>
            {prices.map((price, i) => (
                <g key={i}>
                    <path d={`M988 ${rows[i] + 0.5}h3`} stroke="#e0e0e0" />
                    <text x="992" y={rows[i] + 4}>{price}</text>
                </g>
            ))}
            <rect x="990" y="145" width="33" height="11" />
            <text x="992" y="154" fill="#000000">199.21</text>
            {dates.map((date, i) => (
                <g key={date}>
                    <path d={`M${Math.round(5 + i * 62.3) - 0.5} 318v3`} stroke="#e0e0e0" />
                    <text x={Math.round(3 + i * 62.3)} y="330">{date}</text>
                </g>
            ))}
        </svg>
    );
}

/* ---------- strategy tester ---------- */

const TesterRow = styled.section`
    display: flex;
    flex: 1;
    padding-right: 4px;
`;

const Spine = styled.div`
    display: flex;
    flex-direction: column;
    flex: none;
    width: 12px;
    padding: 0 1px 4px 0;
    background-color: #f4f4f4;
`;

const SpineTitle = styled.span`
    flex: 1;
    background-color: #808080;
    color: #c8c8c8;
    line-height: 11px;
    writing-mode: vertical-rl;
    transform: rotate(180deg);
`;

const TesterBody = styled.div`
    display: flex;
    flex-direction: column;
    flex: 1;
    border-top: 1px solid #a8a8a8;
    border-left: 1px solid #a8a8a8;
    background-color: #f4f4f4;
`;

const TesterForm = styled.form`
    display: flex;
    flex: 1;
    padding: 9px 9px 3px 7px;
    background-color: #ffffff;
`;

const Settings = styled.div`
    display: flex;
    flex-direction: column;
    width: 124px;
    flex: none;
    padding-bottom: 5px;
`;

const ComboBox = styled.div`
    position: relative;
    display: flex;
    flex: none;
    width: ${({ $width }) => $width || "100%"};
    height: 21px;
`;

const Select = styled.select`
    appearance: none;
    flex: 1;
    padding: 1px 0 0 3px;
    border: 1px solid #b0b0b0;
    background-color: ${({ $gray }) => ($gray ? "#f6f6f6" : "#ffffff")};
`;

const ComboArrow = styled.span`
    position: absolute;
    top: 2px;
    right: 2px;
    display: flex;
    justify-content: center;
    align-items: center;
    width: 16px;
    height: 17px;
    border: 1px solid #b0b0b0;
    border-radius: 2px;
    background-color: #ffffff;
    pointer-events: none;
`;

const FieldLabel = styled.span`
    height: 28px;
    padding: 12px 8px 0 0;
    text-align: right;
`;

const CheckField = styled.label`
    display: flex;
    justify-content: flex-end;
    gap: 4px;
    height: 28px;
    padding-top: 12px;
    line-height: 22px;
`;

const CheckBox = styled.input`
    appearance: none;
    width: 13px;
    height: 13px;
    margin: 0;
    border: 1px solid #a8a8a8;
    background-color: #ffffff;

    &:checked {
        background: #ffffff
            url("data:image/svg+xml,%3Csvg xmlns='http://www.w3.org/2000/svg' viewBox='0 0 11 11'%3E%3Cpath d='M2 4.500l2.500 3L9 2.500' fill='none' stroke='%23111' stroke-width='2'/%3E%3C/svg%3E");
    }
`;

const TextInput = styled.input`
    height: 20px;
    margin-top: auto;
    border: 1px solid #b0b0b0;
    border-right: 0;
    background-color: #ffffff;
`;

const ExpertPicker = styled.div`
    display: flex;
    flex-direction: column;
    flex: 1;
    min-width: 0;
`;

const ExpertList = styled.div`
    display: flex;
    flex: 1;
    border: 1px solid #a0a0a0;
`;

const Actions = styled.div`
    display: flex;
    flex-direction: column;
    gap: 6px;
    width: 146px;
    flex: none;
    margin-left: 7px;
    padding-bottom: 3px;
`;

const ActionButton = styled.button`
    height: 22px;
    padding: 1px 2px 0 0;
    border: 1px solid #b0b0b0;
    background-color: #f4f4f4;
    font-weight: ${({ $strong }) => ($strong ? 700 : 400)};
    margin-top: ${({ $strong }) => ($strong ? "auto" : "0")};
`;

/* ---------- status bar ---------- */

const StatusBar = styled.footer`
    display: flex;
    align-items: stretch;
    height: 24px;
    padding: 4px 0 1px;
    border-top: 1px solid #b0b0b0;
    overflow: hidden;
`;

const StatusCell = styled.span`
    display: flex;
    align-items: center;
    gap: 3px;
    flex: ${({ $width }) => ($width ? "none" : 1)};
    width: ${({ $width }) => ($width ? `${$width}px` : "auto")};
    padding: 3px 0 0 4px;
    border-left: 1px solid #b0b0b0;

    &:first-child {
        padding-left: 0;
        border-left: 0;
    }
`;

const ResizeGrip = styled.svg`
    align-self: flex-end;
    margin-left: auto;
    flex: none;
`;

const toolRows = [
    [
        ["newChart", 34, { caret: true }],
        ["profiles", 35, { caret: true }],
        ["|", 9],
        ["market", 20, { pressed: true }],
        ["crosshair", 28],
        ["navigator", 21, { pressed: true }],
        ["terminal", 27],
        ["tester", 22, { pressed: true }],
        ["|", 9],
        ["order", 86, { label: "Nova Ordem", disabled: true }],
        ["book", 29],
        ["printer", 22],
        ["signal", 25],
        ["auto", 153, { label: "Negociação Automatizada", pressed: true }],
    ],
    [
        ["bars", 23, { pressed: true }],
        ["candles", 29],
        ["line", 20],
        ["|", 8],
        ["zoomIn", 23],
        ["zoomOut", 25],
        ["tiles", 23],
        ["|", 8],
        ["scroll", 21, { pressed: true }],
        ["shift", 28],
        ["|", 6],
        ["indicators", 32, { caret: true }],
        ["clock", 35, { caret: true }],
        ["template", 35, { caret: true }],
    ],
    [
        ["cursor", 23, { pressed: true }],
        ["cross", 26],
        ["|", 6],
        ["vline", 24],
        ["hline", 27],
        ["trend", 22],
        ["channel", 26],
        ["fibo", 24],
        ["text", 24],
        ["label", 24],
        ["arrows", 32, { caret: true }],
    ],
];

function App() {
    const [timeframe, setTimeframe] = useState("H1");
    const [expert, setExpert] = useState("EAReversalDiamond.ex4");

    return (
        <Window>
            <GlobalStyle />
            <MenuBar>
                {menus.map((menu, index) => (
                    <MenuItem key={menu} $width={menuWidths[index]}>
                        {menu}
                    </MenuItem>
                ))}
            </MenuBar>

            <ToolbarArea>
                {toolRows.map((row, index) => (
                    <Toolbar key={index}>
                        <Grip />
                        {row.map(([name, width, options = {}], i) =>
                            name === "|" ? (
                                <Separator key={i} $width={width} />
                            ) : (
                                <ToolButton
                                    key={i}
                                    $width={width}
                                    $left={Boolean(options.label)}
                                    $pressed={options.pressed}
                                    disabled={options.disabled}
                                    aria-label={options.label || name}
                                >
                                    {icons[name]}
                                    {options.label}
                                    {options.caret && <Caret />}
                                </ToolButton>
                            )
                        )}
                    </Toolbar>
                ))}
                <Toolbar $last>
                    <Grip />
                    {timeframes.map((name, index) => (
                        <TimeButton
                            key={name}
                            $width={timeframeWidths[index]}
                            $pressed={name === timeframe}
                            onClick={() => setTimeframe(name)}
                        >
                            {name}
                        </TimeButton>
                    ))}
                </Toolbar>
                <CornerTools>
                    <CornerButton aria-label="Procurar">
                        <svg width="16" height="16" viewBox="0 0 16 16" fill="none">
                            <path d="M3 14l4-4" stroke="#3f68b8" strokeWidth="2.500" />
                            <circle cx="9.500" cy="7" r="3.800" fill="#ffffff" stroke="#4a74c4" strokeWidth="1.500" />
                        </svg>
                    </CornerButton>
                    <CornerButton aria-label="Notificações">
                        <svg width="24" height="22" viewBox="0 0 24 22">
                            <path d="M3 12c0-6 12-6 14 0 0 5-5 6-9 5l-4 3v-4c-1-1-1-2-1-4z" fill="#e0e0e0" stroke="#b0b0b0" />
                        </svg>
                        <Badge>1</Badge>
                    </CornerButton>
                </CornerTools>
            </ToolbarArea>

            <MainRow>
                <Dock $width={181}>
                    <DockTitle>
                        <TitleText>Observação do Mercado: 06:45:04</TitleText>
                        <CloseButton aria-label="Fechar">
                            <CloseMark />
                        </CloseButton>
                    </DockTitle>
                    <DockBody>
                        <QuoteTable>
                            <thead>
                                <tr>
                                    <HeadCell $width={67}>Ativo</HeadCell>
                                    <HeadCell $width={45}>Bid (...</HeadCell>
                                    <HeadCell $width={46}>Ask (...</HeadCell>
                                </tr>
                            </thead>
                            <tbody>
                                {symbols.map(([name, bid, ask, up]) => (
                                    <tr key={name}>
                                        <SymbolCell $active={name === "AAPLm"}>
                                            <ArrowIcon up={up} />
                                            {name}
                                        </SymbolCell>
                                        <Cell $up={up}>{bid}</Cell>
                                        <Cell $up={up}>{ask}</Cell>
                                    </tr>
                                ))}
                            </tbody>
                        </QuoteTable>
                        <ScrollBar before={0} size={25} after={290} />
                    </DockBody>
                    <TabBar>
                        <Tab $active>Símbolos</Tab>
                        <Tab>Gráfico de Tick</Tab>
                        <TabDivider />
                    </TabBar>
                </Dock>

                <Dock $width={184} $inset={3}>
                    <DockTitle>
                        <TitleText>Navegador</TitleText>
                        <CloseButton aria-label="Fechar">
                            <CloseMark />
                        </CloseButton>
                    </DockTitle>
                    <DockBody>
                        <TreeBox $top={1}>
                            <Tree $height={344} $indent={10}>
                                {indicators.map(([name, custom]) => (
                                    <TreeRow key={name}>
                                        <Branch $width={18} />
                                        <Branch $width={11} $dash />
                                        <IndicatorIcon custom={custom} />
                                        <TreeLabel $wide>{name}</TreeLabel>
                                    </TreeRow>
                                ))}
                                <TreeRow $root>
                                    <Expander aria-label="Expandir">
                                        <svg width="5" height="5">
                                            <path d="M0 2.500h5M2.500 0v5" stroke="#111111" />
                                        </svg>
                                    </Expander>
                                    <HatIcon />
                                    <TreeLabel>Expert Advisors (Robôs)</TreeLabel>
                                </TreeRow>
                            </Tree>
                            <PeekRow>
                                <svg width="13" height="4">
                                    <path d="M1 1h11v3H3z" fill="#e8c850" stroke="#a88420" />
                                </svg>
                                Scripts
                            </PeekRow>
                        </TreeBox>
                        <ScrollBar before={138} size={168} after={9} />
                    </DockBody>
                    <TabBar>
                        <Tab $active>Comum</Tab>
                        <Tab>Favoritos</Tab>
                        <TabDivider />
                    </TabBar>
                </Dock>

                <ChartArea>
                    <ChartWindow>
                        <ChartTitle>
                            <svg width="17" height="15" viewBox="0 0 17 15">
                                <rect x="3.500" y="1.500" width="9" height="7" fill="#ffffff" stroke="#5890e0" />
                                <rect x="6.500" y="5.500" width="9" height="8" fill="#ffffff" stroke="#3c78d0" />
                                <path d="M8 10l2-2 2 3 2-2" stroke="#3c78d0" fill="none" />
                            </svg>
                            AAPLm,H1
                            <WindowButton aria-label="Minimizar">
                                <svg width="10" height="9"><path d="M1 8h5" stroke="#222222" strokeWidth="2" /></svg>
                            </WindowButton>
                            <WindowButton aria-label="Maximizar">
                                <svg width="10" height="9">
                                    <path d="M1.500 1.500h7v7h-7zM1 1.500h8" fill="none" stroke="#777777" />
                                </svg>
                            </WindowButton>
                            <WindowButton aria-label="Fechar">
                                <svg width="10" height="9"><path d="M1.500 1l7 7M8.500 1l-7 7" stroke="#222222" strokeWidth="1.500" /></svg>
                            </WindowButton>
                        </ChartTitle>
                        <ChartBox>
                            <PriceChart />
                        </ChartBox>
                    </ChartWindow>
                    <TabBar>
                        <Tab $active>AAPLm,H1</Tab>
                        {["USDCHF,H4", "GBPUSD,H4", "USDJPY,H4"].map((name) => (
                            <React.Fragment key={name}>
                                <Tab>{name}</Tab>
                                <TabDivider />
                            </React.Fragment>
                        ))}
                        <TabArrows>
                            <svg width="4" height="6"><path d="M4 0v6L0 3z" fill="#909090" /></svg>
                            <svg width="4" height="6"><path d="M0 0v6l4-3z" fill="#909090" /></svg>
                        </TabArrows>
                    </TabBar>
                </ChartArea>
            </MainRow>

            <TesterRow>
                <Spine>
                    <CloseButton $width={9} aria-label="Fechar">
                        <CloseMark />
                    </CloseButton>
                    <SpineTitle>Examinador</SpineTitle>
                </Spine>
                <TesterBody>
                    <TesterForm onSubmit={(event) => event.preventDefault()}>
                        <Settings>
                            <ComboBox $width="117px">
                                <Select aria-label="Tipo">
                                    <option>Consultor</option>
                                </Select>
                                <ComboArrow>
                                    <Chevron />
                                </ComboArrow>
                            </ComboBox>
                            <FieldLabel>Ativo:</FieldLabel>
                            <FieldLabel>Modelo:</FieldLabel>
                            <CheckField>
                                Use a Data
                                <CheckBox type="checkbox" defaultChecked />
                            </CheckField>
                            <CheckField>
                                Modo Visual
                                <CheckBox type="checkbox" />
                            </CheckField>
                            <TextInput aria-label="Progresso" />
                        </Settings>

                        <ExpertPicker>
                            <ComboBox>
                                <Select $gray aria-label="Expert" value={expert} onChange={(event) => setExpert(event.target.value)}>
                                    {experts.map((name) => (
                                        <option key={name}>{name}</option>
                                    ))}
                                </Select>
                                <ComboArrow>
                                    <Chevron />
                                </ComboArrow>
                            </ComboBox>
                            <ExpertList>
                                <TreeBox>
                                    <Tree $height={265} $indent={8}>
                                        {experts.map((name) => (
                                            <TreeRow key={name} onClick={() => setExpert(name)}>
                                                <Branch $width={10} $dash />
                                                <HatIcon />
                                                <TreeLabel $selected={name === expert}>{name}</TreeLabel>
                                            </TreeRow>
                                        ))}
                                    </Tree>
                                </TreeBox>
                                <ScrollBar before={38} size={208} after={0} />
                            </ExpertList>
                        </ExpertPicker>

                        <Actions>
                            <ActionButton>Propriedades do Expert</ActionButton>
                            <ActionButton>Propriedades dos Ativos</ActionButton>
                            <ActionButton>Abrir gráfico</ActionButton>
                            <ActionButton>Modificar expert</ActionButton>
                            <ActionButton $strong>Iniciar</ActionButton>
                        </Actions>
                    </TesterForm>
                    <TabBar>
                        <Tab $active>Configurações</Tab>
                        <Tab>Diário</Tab>
                        <TabDivider />
                    </TabBar>
                </TesterBody>
            </TesterRow>

            <StatusBar>
                <StatusCell>Para o Ajuda, pressione F1</StatusCell>
                <StatusCell $width={109}>Default</StatusCell>
                <StatusCell $width={98} />
                <StatusCell $width={69} />
                <StatusCell $width={69} />
                <StatusCell $width={66} />
                <StatusCell $width={68} />
                <StatusCell $width={66} />
                <StatusCell $width={121}>
                    <svg width="23" height="13" viewBox="0 0 23 13">
                        <path
                            d="M1.500 0v13M4.500 0v13M7.500 0v13M10.500 0v13M13.500 0v13M16.500 0v13M19.500 0v13M22 0v13"
                            stroke="#a83224"
                            strokeWidth="2"
                        />
                        <path d="M0 11L23 3" stroke="#f4f4f4" />
                    </svg>
                    Conta inválida
                </StatusCell>
                <ResizeGrip width="16" height="16" viewBox="0 0 16 16">
                    <path d="M2 16L16 2M6 16L16 6" stroke="#a0a0a0" />
                    <path d="M16 8v8H8z" fill="#111111" />
                </ResizeGrip>
            </StatusBar>
        </Window>
    );
}

export default App;
